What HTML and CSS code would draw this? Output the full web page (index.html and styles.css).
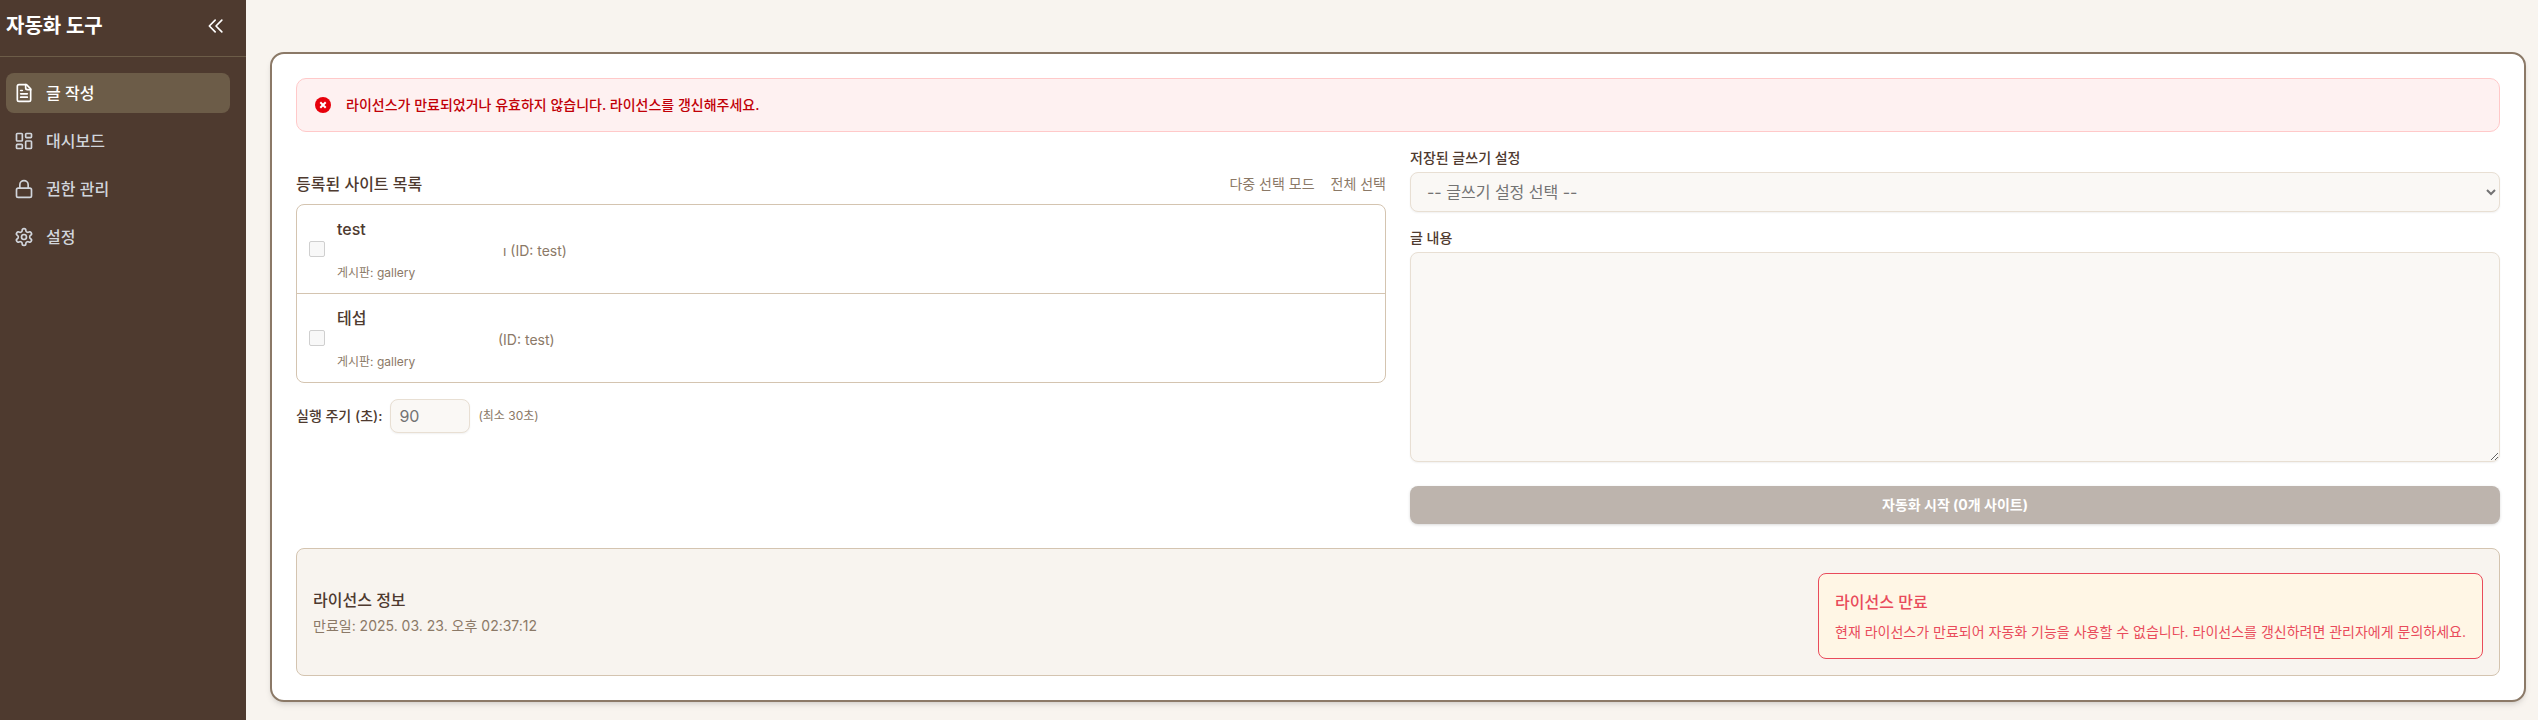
FILE: index.html
```html
<!DOCTYPE html>
<html lang="ko">
<head>
	<meta charset="UTF-8">
	<meta name="viewport" content="width=device-width, initial-scale=1.0">
	<title>자동화 도구</title>
	<link rel="stylesheet" href="styles.css">
</head>
<body>
	<aside class="sidebar">
		<div class="sidebar-header">
			<h1>자동화 도구</h1>
			<button type="button" class="collapse-btn" aria-label="메뉴 접기">
				<svg class="icon" viewBox="0 0 24 24"><path d="M11 19l-7-7 7-7m8 14l-7-7 7-7"/></svg>
			</button>
		</div>
		<nav class="menu">
			<a href="#" class="menu-item active">
				<svg class="icon" viewBox="0 0 24 24"><path d="M15 2H6a2 2 0 0 0-2 2v16a2 2 0 0 0 2 2h12a2 2 0 0 0 2-2V7Z"/><path d="M14 2v4a2 2 0 0 0 2 2h4M10 9H8M16 13H8M16 17H8"/></svg>
				<span>글 작성</span>
			</a>
			<a href="#" class="menu-item">
				<svg class="icon" viewBox="0 0 24 24"><rect x="3" y="3" width="7" height="9" rx="1"/><rect x="14" y="3" width="7" height="5" rx="1"/><rect x="14" y="12" width="7" height="9" rx="1"/><rect x="3" y="16" width="7" height="5" rx="1"/></svg>
				<span>대시보드</span>
			</a>
			<a href="#" class="menu-item">
				<svg class="icon" viewBox="0 0 24 24"><rect x="3" y="11" width="18" height="11" rx="2"/><path d="M7 11V7a5 5 0 0 1 10 0v4"/></svg>
				<span>권한 관리</span>
			</a>
			<a href="#" class="menu-item">
				<svg class="icon" viewBox="0 0 24 24"><path d="M12.22 2h-.44a2 2 0 0 0-2 2v.18a2 2 0 0 1-1 1.73l-.43.25a2 2 0 0 1-2 0l-.15-.08a2 2 0 0 0-2.73.73l-.22.38a2 2 0 0 0 .73 2.73l.15.1a2 2 0 0 1 1 1.72v.51a2 2 0 0 1-1 1.74l-.15.09a2 2 0 0 0-.73 2.73l.22.38a2 2 0 0 0 2.73.73l.15-.08a2 2 0 0 1 2 0l.43.25a2 2 0 0 1 1 1.73V20a2 2 0 0 0 2 2h.44a2 2 0 0 0 2-2v-.18a2 2 0 0 1 1-1.73l.43-.25a2 2 0 0 1 2 0l.15.08a2 2 0 0 0 2.73-.73l.22-.39a2 2 0 0 0-.73-2.73l-.15-.08a2 2 0 0 1-1-1.74v-.5a2 2 0 0 1 1-1.74l.15-.09a2 2 0 0 0 .73-2.73l-.22-.38a2 2 0 0 0-2.73-.73l-.15.08a2 2 0 0 1-2 0l-.43-.25a2 2 0 0 1-1-1.73V4a2 2 0 0 0-2-2z"/><circle cx="12" cy="12" r="3"/></svg>
				<span>설정</span>
			</a>
		</nav>
	</aside>

	<main class="content">
		<section class="card">
			<div class="alert" role="alert">
				<svg class="alert-icon" viewBox="0 0 16 16"><circle cx="8" cy="8" r="8"/><path d="M6 6l4 4M10 6l-4 4"/></svg>
				<span>라이선스가 만료되었거나 유효하지 않습니다. 라이선스를 갱신해주세요.</span>
			</div>

			<div class="columns">
				<div class="sites">
					<div class="sites-header">
						<h2>등록된 사이트 목록</h2>
						<div class="sites-actions">
							<button type="button">다중 선택 모드</button>
							<button type="button">전체 선택</button>
						</div>
					</div>
					<ul class="site-list">
						<li>
							<input type="checkbox" id="site1" disabled>
							<label for="site1">
								<span class="site-name">test</span>
								<span class="site-id wide">ı (ID: test)</span>
								<span class="site-board">게시판: gallery</span>
							</label>
						</li>
						<li>
							<input type="checkbox" id="site2" disabled>
							<label for="site2">
								<span class="site-name">테섭</span>
								<span class="site-id">(ID: test)</span>
								<span class="site-board">게시판: gallery</span>
							</label>
						</li>
					</ul>
					<div class="interval">
						<label for="interval">실행 주기 (초):</label>
						<input type="number" id="interval" class="field" value="90" min="30" disabled>
						<span class="hint">(최소 30초)</span>
					</div>
				</div>

				<form class="editor">
					<label for="preset">저장된 글쓰기 설정</label>
					<select id="preset" class="field" disabled>
						<option>-- 글쓰기 설정 선택 --</option>
					</select>
					<label for="body">글 내용</label>
					<textarea id="body" class="field" disabled></textarea>
					<button type="button" class="start-btn" disabled>자동화 시작 (0개 사이트)</button>
				</form>
			</div>

			<div class="license">
				<div class="license-info">
					<h3>라이선스 정보</h3>
					<p>만료일: 2025. 03. 23. 오후 02:37:12</p>
				</div>
				<div class="license-expired">
					<h3>라이선스 만료</h3>
					<p>현재 라이선스가 만료되어 자동화 기능을 사용할 수 없습니다. 라이선스를 갱신하려면 관리자에게 문의하세요.</p>
				</div>
			</div>
		</section>
	</main>
</body>
</html>
```
FILE: styles.css
```css
* {
	box-sizing: border-box;
	margin: 0;
	padding: 0;
}
body {
	display: flex;
	min-height: 100vh;
	background: #f8f4ef;
	color: #4e3a2f;
	font-family: Inter, "Noto Sans CJK KR", sans-serif;
	font-size: 14px;
	line-height: 20px;
}
button, input, select, textarea {
	font: inherit;
}
h2, h3 {
	font-size: 16px;
	line-height: 24px;
	font-weight: 500;
}

/* Sidebar */
.sidebar {
	flex: none;
	width: 246px;
	background: #4e3a2f;
	color: #fff;
}
.sidebar-header {
	display: flex;
	justify-content: space-between;
	align-items: center;
	padding: 12px 16px 16px 6px;
	border-bottom: 1px solid #6c5c48;
}
.sidebar-header h1 {
	font-size: 20px;
	line-height: 28px;
	font-weight: 700;
}
.collapse-btn {
	display: flex;
	padding: 4px;
	border: 0;
	background: none;
	color: #fff;
	cursor: pointer;
}
.icon {
	width: 20px;
	height: 20px;
	fill: none;
	stroke: currentColor;
	stroke-width: 2;
	stroke-linecap: round;
	stroke-linejoin: round;
}
.menu {
	display: flex;
	flex-direction: column;
	gap: 8px;
	padding: 16px 16px 16px 6px;
}
.menu-item {
	display: flex;
	align-items: center;
	gap: 12px;
	padding: 8px;
	border-radius: 8px;
	color: #d1d5dc;
	font-size: 16px;
	line-height: 24px;
	font-weight: 500;
	text-decoration: none;
}
.menu-item.active {
	background: #6c5c48;
	color: #fff;
}

/* Content */
.content {
	flex: 1;
	min-width: 0;
	padding: 52px 12px 18px 24px;
}
.card {
	padding: 24px;
	border: 2px solid #8b7967;
	border-radius: 14px;
	background: #fff;
	box-shadow: 0 4px 6px -1px rgba(0, 0, 0, 0.1), 0 2px 4px -2px rgba(0, 0, 0, 0.1);
}
.alert {
	display: flex;
	align-items: center;
	gap: 15px;
	padding: 16px 18px;
	border: 1px solid #ffc9c9;
	border-radius: 10px;
	background: #fef1f1;
	color: #c10007;
	font-weight: 500;
}
.alert-icon {
	width: 16px;
	height: 16px;
	fill: #e7000b;
	stroke: #fff;
}
.alert-icon circle {
	stroke: none;
}
.alert-icon path {
	stroke-width: 2;
	stroke-linecap: square;
}
.columns {
	display: grid;
	grid-template-columns: 1fr 1fr;
	gap: 24px;
	margin: 16px 0 24px;
}

/* Site list */
.sites {
	padding-top: 24px;
}
.sites-header {
	display: flex;
	justify-content: space-between;
	align-items: center;
	margin-bottom: 8px;
}
.sites-actions {
	display: flex;
	gap: 16px;
}
.sites-actions button {
	border: 0;
	background: none;
	color: #8b7967;
	cursor: pointer;
}
.site-list {
	border: 1px solid #d4c4b0;
	border-radius: 8px;
	list-style: none;
}
.site-list li {
	display: flex;
	align-items: center;
	gap: 12px;
	padding: 12px;
}
.site-list li + li {
	border-top: 1px solid #d4c4b0;
}
.site-list input {
	appearance: none;
	width: 16px;
	height: 16px;
	border: 1px solid #cfcfcf;
	border-radius: 2px;
	background: #f8f8f8;
}
.site-list label span {
	display: block;
}
.site-list .site-name {
	font-size: 16px;
	line-height: 24px;
	font-weight: 500;
}
.site-list .site-id {
	padding-left: 161px;
	color: #8b7967;
}
.site-list .wide {
	padding-left: 166px;
}
.site-list .site-board {
	margin-top: 4px;
	color: #8b7967;
	font-size: 12px;
	line-height: 16px;
}
.interval {
	display: flex;
	align-items: center;
	gap: 8px;
	margin-top: 16px;
}
.interval label {
	font-weight: 500;
}
.interval input {
	width: 80px;
	padding: 4px 8px;
}
.hint {
	color: #8b7967;
	font-size: 12px;
}

/* Form */
.field {
	border: 1px solid #e8dfd3;
	border-radius: 8px;
	background: #faf8f5;
	color: #737373;
	font-size: 16px;
	line-height: 24px;
	box-shadow: 0 1px 2px rgba(0, 0, 0, 0.06);
	opacity: 1;
}
.editor {
	display: flex;
	flex-direction: column;
}
.editor label {
	margin-bottom: 4px;
	font-weight: 500;
}
.editor .field {
	padding: 8px 12px;
}
.editor select.field {
	height: 40px;
	margin-bottom: 16px;
}
.editor textarea.field {
	height: 210px;
	margin-bottom: 24px;
	resize: vertical;
}
.start-btn {
	padding: 9px 16px;
	border: 0;
	border-radius: 8px;
	background: #bdb4ad;
	color: #fff;
	font-weight: 700;
	box-shadow: 0 1px 3px rgba(0, 0, 0, 0.15);
}

/* License */
.license {
	display: flex;
	justify-content: space-between;
	align-items: center;
	padding: 16px;
	border: 1px solid #d4c4b0;
	border-radius: 8px;
	background: #f8f4ef;
}
.license-info h3 {
	margin-bottom: 4px;
}
.license-info p {
	color: #8b7967;
}
.license-expired {
	margin-top: 8px;
	padding: 16px;
	border: 1px solid #e94b5b;
	border-radius: 8px;
	background: #fff6e5;
	color: #e94b5b;
}
.license-expired h3 {
	margin-bottom: 8px;
}
```
